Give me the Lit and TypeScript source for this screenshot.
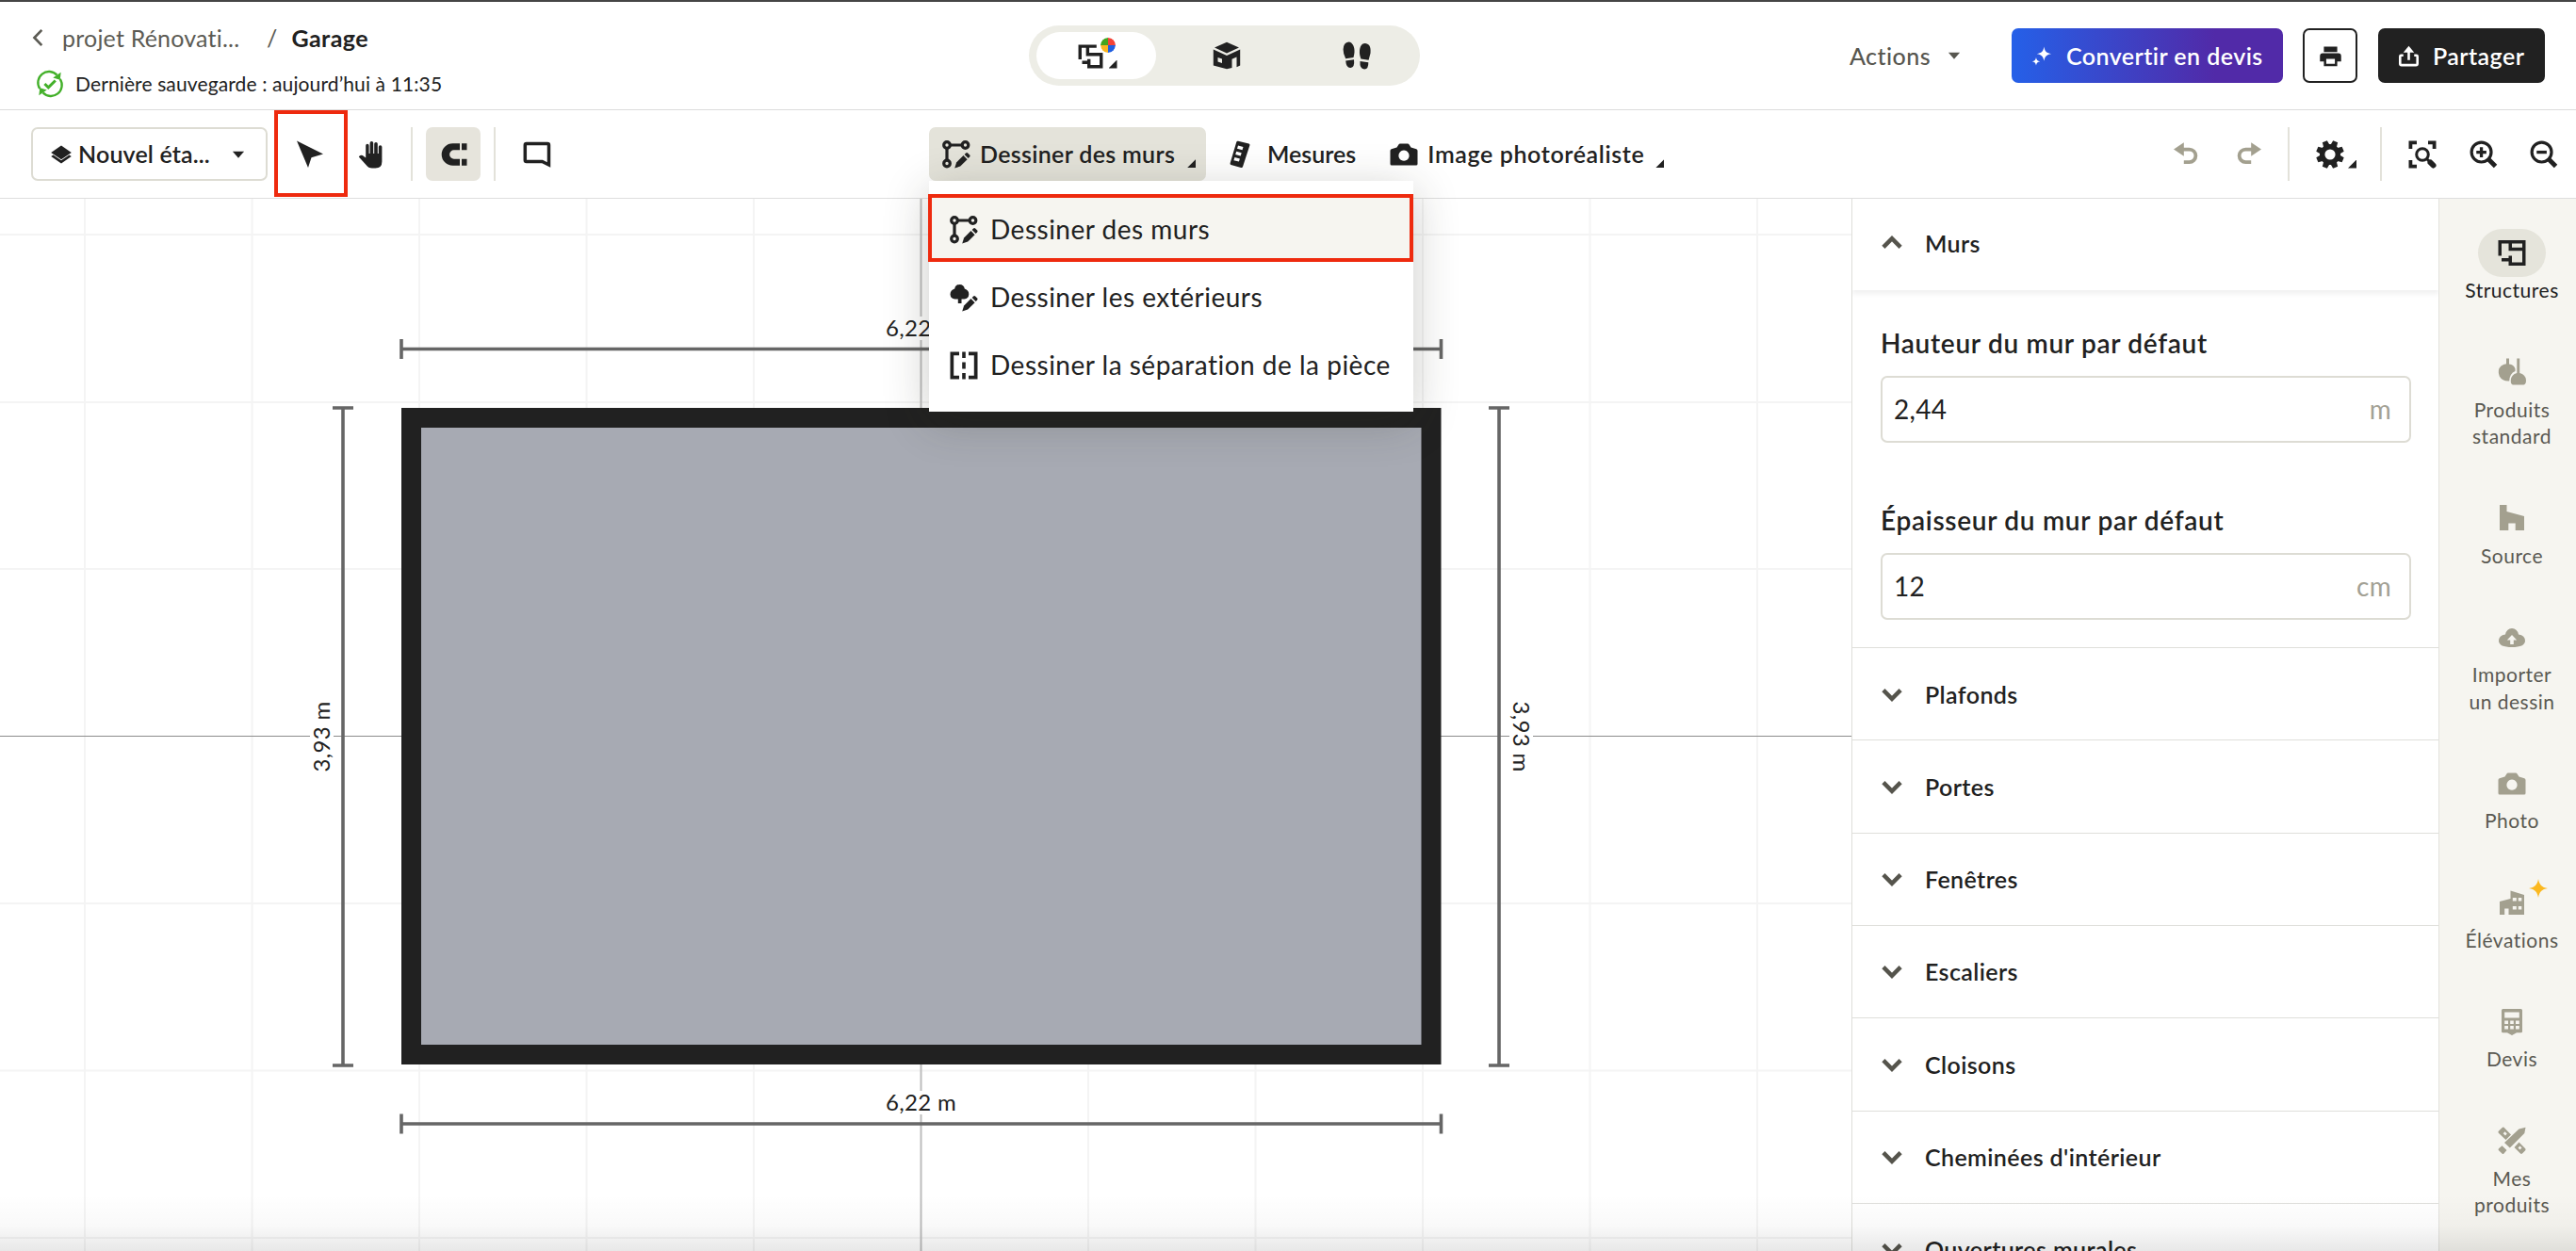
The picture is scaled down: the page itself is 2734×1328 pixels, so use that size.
import { LitElement, html, svg, css, nothing } from "lit";
import type { TemplateResult } from "lit";
import { classMap } from "lit/directives/class-map.js";

/* Icons are drawn on a 30 x 30 grid, one unit per pixel at their natural size. */
const drawWall = svg`
  <g fill="none" stroke="currentColor" stroke-width="3.2">
    <circle cx="5" cy="5" r="3.3"/><circle cx="24.5" cy="5" r="3.3"/><circle cx="5" cy="24.5" r="3.3"/>
    <path d="M8 5H21M5 8V21"/>
  </g>
  <path d="M13.2 29.5l1.9-6 7.4-7.4 4.1 4.1-7.4 7.4z"/><path d="M23.6 14.9l1.5-1.5q1-1 2 0l2 2q1 1 0 2l-1.5 1.500z"/>`;

const plan = svg`<path fill-rule="evenodd" d="M.5 1H29.500V28H11.500V23.500H4V20H11.500V17.500H15V24.500H26V12.300H11.500V4.500H4V17.500H.5zM15 4.500V8.800H26V4.500z"/>`;

const planColor = svg`<path fill="none" stroke="currentColor" stroke-width="3.800" d="M2.500 19V3.500H22M11.500 5V13H27.500V27.500H13V18.500M5 22.500H13"/>`;

const camera = svg`<path fill-rule="evenodd" d="M11 3.500H19Q20 3.500 20.600 4.400L22.500 7.500 28.300 9.300Q29.500 9.700 29.500 11V25Q29.500 26.500 28 26.500H2Q.5 26.500 .5 25V11Q.5 9.700 1.700 9.300L7.500 7.500 9.400 4.400Q10 3.500 11 3.500zM15 10.600a5.600 5.600 0 1 0 .01 0z"/>`;

const sparkle = svg`<path d="M17.500 2c1 6.500 3.500 9 10 10-6.500 1-9 3.500-10 10-1-6.500-3.500-9-10-10 6.500-1 9-3.500 10-10z"/><path d="M6.500 17c.7 3.700 1.800 4.800 5.500 5.500-3.700.7-4.800 1.800-5.500 5.500-.7-3.700-1.800-4.800-5.500-5.500 3.700-.7 4.800-1.800 5.500-5.500z"/>`;

const icons: Record<string, TemplateResult> = {
  back: svg`<path d="M19.500 4L8.800 15l10.700 11" fill="none" stroke="currentColor" stroke-width="3.600"/>`,
  saved: svg`<g fill="none" stroke="currentColor" stroke-width="2.500">
      <path d="M3.500 20.500A12.500 12.500 0 0 1 23 5"/><path d="M26.500 9.500A12.500 12.500 0 0 1 7 25"/>
      <path d="M9 15l4.200 4.200 8-8" stroke-width="3.200"/></g>
      <path d="M27.500 2l-1 8.500-8-2.500zM2.500 28l1-8.500 8 2.500z"/>`,
  layers: svg`<path d="M15 3L28.500 12.500 15 21.500 1.500 12.500z"/><path d="M1.500 17.500L4.500 15.500 15 22.800 25.500 15.500 28.500 17.500 15 27z"/>`,
  caret: svg`<path d="M2 8H28L15 23z"/>`,
  cursor: svg`<path d="M1 .5L29 14.500 16.500 18.200 13 29z"/>`,
  hand: svg`<path d="M8.200 5.500a1.700 1.700 0 0 1 3.400 0V14h1V2.700a1.800 1.800 0 0 1 3.600 0V14h1V3.700a1.800 1.800 0 0 1 3.600 0V14h1V7a1.800 1.800 0 0 1 3.600 0V22.500Q25.400 29.500 18.500 29.500H15Q11 29.500 8.500 26L.8 17.500Q2 15 4.800 16L8.200 18.500z"/>`,
  magnet: svg`<path d="M15.800 3.200H22V10.300H15.800a4.500 4.500 0 0 0 0 9.400H22V26.800H14.500a11.800 11.800 0 0 1 0-23.600zM24 3.200H29.500V10.300H24zM24 19.700H29.500V26.800H24z"/>`,
  comment: svg`<path d="M3.800 3.500H26Q27.500 3.500 27.500 5V26L20.500 22.500H3.800Q2.300 22.500 2.300 21V5Q2.300 3.500 3.800 3.500z" fill="none" stroke="currentColor" stroke-width="3.500"/>`,
  house3d: svg`<path d="M15 .8L28 6.500 15 12.500 2 6.500z"/><path fill-rule="evenodd" d="M.8 8.500L15 15 29.200 8.500V25.500L25.500 27.300V16.500L20.500 18.700V28L15 29.200.8 25.500zM5.500 17V21.500L10 23V18.500z"/>`,
  feet: svg`<path d="M6.500.5C10.500.8 13 6 12.500 11.500Q12.300 14 11.500 17L3.200 18.300Q.5 13 .6 8.500.8 1 6.500.5zM3.200 20.500L12 19.300Q13 27.500 8.500 28 3.800 28.400 3.200 20.500z"/><path d="M24 2C29.500 2.500 30 8 29.500 12.500L27.600 19.700 19.400 18.500C18.200 15 17.800 12.500 18 10 18.400 5 20.500 1.800 24 2zM18.500 21L27.300 22.200Q27.500 29.500 23 29.400 17.800 29.200 18.500 21z"/>`,
  plan,
  planColor,
  drawWall,
  ruler: svg`<path fill-rule="evenodd" d="M13 .8L24.500 3.500Q25.800 4 25.400 5.200L18 28Q17.500 29.200 16.200 28.900L5.500 26Q4.200 25.500 4.600 24.200L11.300 1.800Q11.800.5 13 .8zM13 5.500L12 8.800 17.500 10.200 18.500 7zM11.200 11.700L10.200 15 15.700 16.400 16.700 13.200zM9.400 17.900L8.400 21.200 13.900 22.600 14.900 19.400z"/>`,
  camera,
  undo: svg`<path d="M0 9.500L12 1.500V17.500z"/><path d="M10 9.500H18.500a7.500 7.500 0 0 1 0 15H12" fill="none" stroke="currentColor" stroke-width="4.200"/>`,
  redo: svg`<path d="M30 9.500L18 1.500V17.500z"/><path d="M20 9.500H11.500a7.500 7.500 0 0 0 0 15H18" fill="none" stroke="currentColor" stroke-width="4.200"/>`,
  gear: svg`<circle cx="15" cy="15" r="8.300" fill="none" stroke="currentColor" stroke-width="5.400"/>
      ${[0, 45, 90, 135, 180, 225, 270, 315].map((a) => svg`<path d="M11.500 6L12.300.2H17.700L18.500 6z" transform="rotate(${a + 22.5} 15 15)"/>`)}`,
  fit: svg`<path d="M.5.5H9V4.300H4.300V9H.5zM21 .5H29.500V9H25.700V4.300H21zM.5 21H4.300V25.700H9V29.500H.5z"/>
      <g fill="none" stroke="currentColor"><circle cx="15" cy="15" r="6.300" stroke-width="3"/><path d="M19.500 19.500L22 22" stroke-width="3"/><path d="M23.500 23.500L26.500 26.500" stroke-width="6" stroke-linecap="round"/></g>`,
  zoomIn: svg`<g fill="none" stroke="currentColor"><circle cx="13" cy="13" r="10.800" stroke-width="3.300"/><path d="M21 21L28.500 28.500" stroke-width="5"/><path d="M13 7.500V18.500M7.500 13H18.500" stroke-width="3.400"/></g>`,
  zoomOut: svg`<g fill="none" stroke="currentColor"><circle cx="13" cy="13" r="10.800" stroke-width="3.300"/><path d="M21 21L28.500 28.500" stroke-width="5"/><path d="M7.500 13H18.500" stroke-width="3.400"/></g>`,
  sparkle,
  printer: svg`<path fill-rule="evenodd" d="M6.500 3H23.500V10H6.500zM5 11.500H25Q28.500 11.500 28.500 15V22H23.500V28H6.500V22H1.500V15Q1.500 11.500 5 11.500zM9.500 18.500V25H20.500V18.500z"/>`,
  share: svg`<path d="M15 1L22.500 10H7.500z"/><path d="M15 9V20.500M7.500 14H4.500Q3 14 3 15.500V25.500Q3 27.500 5 27.500H25Q27 27.500 27 25.500V15.500Q27 14 25.500 14H22.500" fill="none" stroke="currentColor" stroke-width="3.400"/>`,
  tree: svg`<path d="M10.500 1Q15 1 15.800 5.500 20.500 7 20.300 11.500 20 16 15.500 16.500H12.500V21H8.800V16.500H5.500Q.8 16 .5 11.500.5 7 5.200 5.500 6 1 10.500 1z"/>
      <path d="M13.200 29.500l1.900-6 7.400-7.400 4.100 4.100-7.400 7.400z"/><path d="M23.600 14.900l1.500-1.500q1-1 2 0l2 2q1 1 0 2l-1.500 1.500z"/>`,
  split: svg`<path d="M.5.5H10V4.200H4.200V25.800H10V29.500H.5zM20 .5H29.500V29.500H20V25.800H25.800V4.200H20zM13.200.5H16.800V7H13.200zM13.200 11.500H16.800V18.500H13.200zM13.200 23H16.800V29.500H13.200z"/>`,
  up: svg`<path d="M4.500 20L15 9.500l10.500 10.500" fill="none" stroke="currentColor" stroke-width="5.200"/>`,
  down: svg`<path d="M4.500 10L15 20.500l10.500-10.500" fill="none" stroke="currentColor" stroke-width="5.200"/>`,
  lamps: svg`<path d="M9 .5H12V6.500Q17 7 18.500 11.500V14Q12.500 16.500 12.200 24.500 5 25 1.800 19.500-1 12.500 3.500 8.500 6 6.500 9 6.200z"/><path d="M20.300.5H23.200V16Q29.500 17.500 30 23.500 30 28 27.500 28.500H16Q13.600 28 13.800 23.500 14.300 17.500 20.300 16z"/>`,
  source: svg`<path d="M2 1H9.500V8L28 13V28H18.700V20.500H11.300V28H2z"/>`,
  cloud: svg`<path fill-rule="evenodd" d="M8 11.500Q9.500 5 15 5T22 11.500Q29 12.500 29 18.500 28.500 25 15 25T1 18.500Q1 12.500 8 11.500zM15 12L9.800 17.500H13.200V22H16.800V17.500H20.200z"/>`,
  facade: svg`<path fill-rule="evenodd" d="M2 14L13.500 11V2.500L28 7V28H11.500V21.500H7.200V28H2zM15.800 10V13.500H19.800V10zM21.800 10V13.500H25.300V10zM15.800 19V22.500H19.800V19zM21.800 19V22.500H25.300V19z"/>`,
  quote: svg`<path fill-rule="evenodd" d="M5.500 1H24.500Q26 1 26 2.500V25Q26 26.200 24.500 26.200H20L15 29 10 26.200H5.500Q4 26.200 4 25V2.500Q4 1 5.500 1zM7.200 4.500V10.500H22.800V4.500zM7.200 13.500V17H11V13.500zM13.200 13.500V17H16.800V13.500zM19 13.500V17H22.800V13.500zM7.200 19V22.500H11V19zM13.200 19V22.500H16.800V19zM19 19V22.500H22.800V19z"/>`,
  tools: svg`<path d="M29.500.8L28.300 7 12.800 22.500 7 17 22.500 2.500z"/><path d="M4.500 20.300L9.500 25 6.500 28.500Q5.500 29.500 4.500 28.500L1 25.300Q0 24.300 1 23.300z"/>
      <path fill-rule="evenodd" d="M6.500.8L14 8.500 8.500 14 .8 6.800Q0 5.800.8 4.800L4.500 1.200Q5.500.2 6.500.8zM7.500 5.300L5.700 7.200 8 9.400 9.800 7.500z"/>
      <path fill-rule="evenodd" d="M22.500 16.500L29.200 23.200Q30 24.200 29.200 25.200L26 28.500Q25 29.400 24 28.500L17.500 22zM23.500 20.500L21.500 22.500 23.500 24.500 25.500 22.500z"/>`,
};

class UiIcon extends LitElement {
  static properties = { name: {}, size: { type: Number } };
  declare name: string;
  declare size: number;
  static styles = css`
    :host { display: inline-flex; flex: none; }
    .glyph { display: block; overflow: visible; fill: currentColor; }
  `;
  render() {
    const size = this.size || 30;
    return html`<svg class="glyph" width=${size} height=${size} viewBox="0 0 30 30">${icons[this.name] ?? nothing}</svg>`;
  }
}
customElements.define("ui-icon", UiIcon);

const base = css`
  :host, * { box-sizing: border-box; }
  .corner { width: 9px; height: 9px; background: #212121; clip-path: polygon(100% 0, 100% 100%, 0 100%); flex: none; }
`;

class AppHeader extends LitElement {
  static styles = [base, css`
    :host { display: grid; grid-template-columns: 1092px 415px 1fr; flex: none; height: 117px; border-top: 2px solid #454545; border-bottom: 1px solid #dcdcdc; background: #fff; }
    .project { display: flex; flex-direction: column; padding: 22px 0 0 30px; }
    .crumbs { display: flex; align-items: center; height: 32px; color: #5c5b54; letter-spacing: .2px; }
    .crumbs .name { margin-left: 14px; width: 217px; white-space: pre; }
    .crumbs .page { margin-left: 15px; font-weight: 700; color: #212121; letter-spacing: .4px; }
    .status { display: flex; align-items: center; gap: 13px; height: 26px; margin: 20px 0 0 9px; font-size: 21px; letter-spacing: .12px; }
    .green { color: #43b02a; }
    .modes { display: flex; align-items: center; margin-top: 25px; height: 64px; padding: 0 8px; gap: 12px; border-radius: 32px; background: #edede6; }
    .mode { display: flex; align-items: center; justify-content: center; flex: none; width: 126px; height: 50px; border-radius: 25px; }
    .mode.on { width: 127px; background: #fff; }
    .view { position: relative; display: flex; width: 42px; height: 30px; align-items: flex-end; gap: 6px; margin: 0 0 3px 2px; }
    .pie { position: absolute; right: 2px; top: -3px; width: 16px; height: 16px; border-radius: 50%; outline: 2px solid #fff; background: conic-gradient(#f44336 0 25%, #1f5fe0 0 50%, #f9b521 0 75%, #43a51f 0); }
    .actions { display: flex; align-items: center; justify-content: flex-end; padding: 0 33px 0 0; height: 114px; letter-spacing: .45px; font-weight: 600; }
    .menu { display: flex; align-items: center; gap: 18px; color: #57564f; margin-right: 54px; font-weight: 500; }
    .btn { display: flex; align-items: center; height: 58px; border-radius: 7px; color: #fff; padding: 0 0 0 21px; flex: none; white-space: nowrap; }
    .quote { width: 288px; gap: 14px; background: linear-gradient(90deg, #2560e8, #512aa8 75%); }
    .print { width: 58px; margin: 0 22px 0 21px; justify-content: center; padding: 0; border: 2px solid #212121; color: #212121; background: #fff; }
    .share { width: 177px; gap: 14px; background: #212121; }
  `];
  render() {
    return html`
      <div class="project">
        <div class="crumbs"><ui-icon name="back" size="22"></ui-icon><span class="name">projet Rénovati...</span><span>/</span><span class="page">Garage</span></div>
        <div class="status"><ui-icon class="green" name="saved" size="28"></ui-icon><span>Dernière sauvegarde : aujourd’hui à 11:35</span></div>
      </div>
      <div class="modes">
        <div class="mode on"><div class="view"><ui-icon name="planColor" size="27"></ui-icon><span class="corner"></span><span class="pie"></span></div></div>
        <div class="mode"><ui-icon name="house3d"></ui-icon></div>
        <div class="mode"><ui-icon name="feet"></ui-icon></div>
      </div>
      <div class="actions">
        <div class="menu">Actions<ui-icon name="caret" size="14"></ui-icon></div>
        <div class="btn quote"><ui-icon name="sparkle" size="23"></ui-icon>Convertir en devis</div>
        <div class="btn print"><ui-icon name="printer" size="25"></ui-icon></div>
        <div class="btn share"><ui-icon name="share" size="23"></ui-icon>Partager</div>
      </div>`;
  }
}
customElements.define("app-header", AppHeader);

class AppToolbar extends LitElement {
  static styles = [base, css`
    :host { display: grid; grid-template-columns: 986px 1fr auto; flex: none; height: 94px; border-bottom: 1px solid #dedede; background: #fff; font-weight: 600; }
    .group { display: flex; align-items: center; height: 93px; }
    .left { padding-left: 33px; }
    .level { display: flex; align-items: center; width: 251px; height: 57px; padding-left: 18px; border: 2px solid #dddcd3; border-radius: 7px; letter-spacing: .15px; }
    .level .label { margin: 0 23px 0 6px; padding-bottom: 2px; white-space: pre; }
    .picked { display: flex; align-items: center; justify-content: center; width: 78px; height: 92px; margin: -2px 11px 0 7px; padding: 2px 2px 0 0; border: 4px solid #ee2a0e; }
    .rule { width: 2px; height: 57px; background: #e3e2da; flex: none; }
    .magnet { display: flex; align-items: center; justify-content: center; width: 58px; height: 57px; border-radius: 7px; background: #e6e4dc; }
    .tool { display: flex; align-items: center; height: 57px; border-radius: 7px; letter-spacing: .32px; white-space: nowrap; }
    .tool.on { width: 294px; padding-left: 14px; background: #e4e3da; }
    .tool .label { margin-left: 10px; padding-bottom: 2px; }
    .low { align-self: flex-end; margin-bottom: 14px; }
    .right { padding-right: 20px; }
    .faded { color: #a3a08f; }
  `];
  render() {
    return html`
      <div class="group left">
        <div class="level"><ui-icon name="layers" size="24"></ui-icon><span class="label">Nouvel éta...</span><ui-icon name="caret" size="14"></ui-icon></div>
        <div class="picked"><ui-icon name="cursor"></ui-icon></div>
        <ui-icon name="hand"></ui-icon>
        <span class="rule" style="margin:0 14px 0 26px"></span>
        <div class="magnet"><ui-icon name="magnet"></ui-icon></div>
        <span class="rule" style="margin:0 29px 0 14px"></span>
        <ui-icon name="comment"></ui-icon>
      </div>
      <div class="group">
        <div class="tool on"><ui-icon name="drawWall"></ui-icon><span class="label">Dessiner des murs</span><span class="corner low" style="margin-left:13px"></span></div>
        <div class="tool" style="margin-left:21px;letter-spacing:0"><ui-icon name="ruler"></ui-icon><span class="label" style="margin-left:14px">Mesures</span></div>
        <div class="tool" style="margin-left:36px;letter-spacing:.62px"><ui-icon name="camera"></ui-icon><span class="label">Image photoréaliste</span><span class="corner low" style="margin-left:12px"></span></div>
      </div>
      <div class="group right">
        <ui-icon class="faded" name="undo" size="27"></ui-icon>
        <ui-icon class="faded" name="redo" size="27" style="margin-left:39px"></ui-icon>
        <span class="rule" style="margin:0 28px"></span>
        <ui-icon name="gear"></ui-icon><span class="corner" style="margin:21px 25px 0 4px"></span>
        <span class="rule" style="margin-right:28px"></span>
        <ui-icon name="fit"></ui-icon>
        <ui-icon name="zoomIn" size="29" style="margin:0 35px"></ui-icon>
        <ui-icon name="zoomOut" size="29"></ui-icon>
      </div>`;
  }
}
customElements.define("app-toolbar", AppToolbar);

class PlanCanvas extends LitElement {
  static styles = css`
    :host { display: block; flex: none; width: 1965px; height: 1117px; background: #fff; overflow: hidden; }
    .plan { display: block; }
    .dim { font-size: 24px; letter-spacing: .35px; fill: #212121; }
  `;
  render() {
    const cols = [90, 267.5, 445, 622.5, 800, 1155, 1332.5, 1510, 1687.5, 1865];
    const rows = [249, 427, 604, 959, 1136.5, 1314];
    return html`<svg class="plan" width="1965" height="1117" viewBox="0 211 1965 1117">
      <g stroke="#f4f4f4" stroke-width="2">
        ${cols.map((x) => svg`<path d="M${x} 211V1328"/>`)}
        ${rows.map((y) => svg`<path d="M0 ${y}H1965"/>`)}
      </g>
      <path d="M0 781.500H1965" stroke="#8c8c8c"/>
      <path d="M977.500 211V1328" stroke="#bdbdbd" stroke-width="2"/>
      <rect x="436.500" y="443.500" width="1082.500" height="676" fill="#a7aab3" stroke="#212121" stroke-width="21"/>
      <g fill="none" stroke="#666" stroke-width="3.600">
        <path d="M426 370.500H1529.500M426 360V381M1529.500 360V381"/>
        <path d="M426 1193H1529.500M426 1182.500V1203.500M1529.500 1182.500V1203.500"/>
        <path d="M364 433V1131M353 433H375M353 1131H375"/>
        <path d="M1591 433V1131M1580 433H1602M1580 1131H1602"/>
      </g>
      <g fill="#fff">
        <rect x="936" y="336" width="84" height="25"/><rect x="936" y="1158" width="84" height="25"/>
        <rect x="329" y="740" width="25" height="83"/><rect x="1602" y="740" width="25" height="83"/>
      </g>
      <g class="dim" text-anchor="middle">
        <text x="977.500" y="357">6,22 m</text>
        <text x="977.500" y="1179">6,22 m</text>
        <text transform="translate(350 782) rotate(-90)">3,93 m</text>
        <text transform="translate(1606 782) rotate(90)">3,93 m</text>
      </g>
    </svg>`;
  }
}
customElements.define("plan-canvas", PlanCanvas);

class SettingsPanel extends LitElement {
  static styles = [base, css`
    :host { display: block; flex: none; width: 624px; height: 1117px; overflow: hidden; border-left: 1px solid #dededa; border-right: 1px solid #e2e2de; background: #fff; }
    .head { display: flex; align-items: center; gap: 22px; padding-left: 29px; font-weight: 600; letter-spacing: .4px; }
    .chev { color: #55544c; }
    .open { height: 97px; box-shadow: 0 4px 5px rgba(0,0,0,.06); }
    .open .head { height: 94px; }
    .body { height: 379px; padding: 39px 29px 0 30px; }
    .label { height: 34px; line-height: 34px; font-size: 28px; font-weight: 600; letter-spacing: .7px; }
    .field { display: flex; align-items: center; justify-content: space-between; height: 71px; margin: 18px 0 65px; padding: 1px 19px 0 12px; border: 2px solid #dddcd4; border-radius: 7px; font-size: 28px; letter-spacing: .3px; }
    .unit { color: #a3a195; }
    .row { height: 98.330px; border-top: 1px solid #dfdfdb; }
    .row .head { height: 97px; }
  `];
  private sections = ["Plafonds", "Portes", "Fenêtres", "Escaliers", "Cloisons", "Cheminées d'intérieur", "Ouvertures murales"];
  render() {
    return html`
      <div class="open"><div class="head"><ui-icon class="chev" name="up" size="26"></ui-icon>Murs</div></div>
      <div class="body">
        <div class="label">Hauteur du mur par défaut</div>
        <div class="field"><span>2,44</span><span class="unit">m</span></div>
        <div class="label">Épaisseur du mur par défaut</div>
        <div class="field"><span>12</span><span class="unit">cm</span></div>
      </div>
      ${this.sections.map((s) => html`<div class="row"><div class="head"><ui-icon class="chev" name="down" size="26"></ui-icon>${s}</div></div>`)}`;
  }
}
customElements.define("settings-panel", SettingsPanel);

class SideRail extends LitElement {
  static styles = [base, css`
    :host { display: flex; flex: none; flex-direction: column; align-items: center; gap: 47px; width: 145px; height: 1117px; padding: 32px 0 0 9px; background: #f6f5f0; overflow: hidden; color: #5a5952; }
    .item { display: flex; flex-direction: column; align-items: center; flex: none; font-size: 21px; line-height: 28.500px; letter-spacing: .5px; text-align: center; }
    .text { white-space: pre-line; }
    .badge { position: relative; display: flex; align-items: center; justify-content: center; width: 72px; height: 51px; border-radius: 26px; color: #a3a08f; }
    .item.on { color: #212121; }
    .on .badge { background: #e5e4db; color: #212121; }
    .star { position: absolute; right: -2px; top: 0; color: #fbb81f; }
    .four { display: block; fill: currentColor; }
  `];
  private items = [
    { icon: "plan", label: "Structures", on: true },
    { icon: "lamps", label: "Produits\nstandard" },
    { icon: "source", label: "Source" },
    { icon: "cloud", label: "Importer\nun dessin" },
    { icon: "camera", label: "Photo" },
    { icon: "facade", label: "Élévations", star: true },
    { icon: "quote", label: "Devis" },
    { icon: "tools", label: "Mes\nproduits" },
  ];
  render() {
    return this.items.map((i) => html`<div class=${classMap({ item: true, on: !!i.on })}>
      <div class="badge"><ui-icon name=${i.icon}></ui-icon>
        ${i.star ? html`<span class="star"><svg class="four" width="20" height="20" viewBox="0 0 20 20"><path d="M10 0c1 6.200 3.800 9 10 10-6.200 1-9 3.800-10 10-1-6.200-3.800-9-10-10 6.200-1 9-3.800 10-10z"/></svg></span>` : nothing}
      </div><span class="text">${i.label}</span></div>`);
  }
}
customElements.define("side-rail", SideRail);

class DrawMenu extends LitElement {
  static styles = [base, css`
    :host { display: block; width: 514px; height: 245px; padding-top: 14px; background: #fff; box-shadow: 0 10px 45px rgba(40,40,30,.24); font-size: 28px; letter-spacing: .5px; }
    .row { display: flex; align-items: center; gap: 13px; height: 72px; padding: 3px 0 0 22px; white-space: nowrap; }
    .row.on { margin-left: -1px; padding-left: 23px; background: #f6f5f0; outline: 4px solid #ee2a0e; outline-offset: -4px; }
  `];
  private rows = [["drawWall", "Dessiner des murs"], ["tree", "Dessiner les extérieurs"], ["split", "Dessiner la séparation de la pièce"]];
  render() {
    return this.rows.map(([icon, label], n) => html`<div class=${classMap({ row: true, on: n === 0 })}><ui-icon name=${icon}></ui-icon>${label}</div>`);
  }
}
customElements.define("draw-menu", DrawMenu);

class AppRoot extends LitElement {
  static styles = css`
    :host { display: flex; flex-direction: column; position: relative; width: 2734px; height: 1328px; overflow: hidden; background: #fff; color: #212121; font: 400 25px/1.2 Lato, "Liberation Sans", sans-serif; }
    .main { display: flex; flex: none; height: 1117px; }
    .popup { position: absolute; left: 986px; top: 192px; }
    .fade { position: absolute; left: 0; right: 0; bottom: 0; height: 60px; pointer-events: none; background: linear-gradient(rgba(0,0,0,0), rgba(0,0,0,.025) 55%, rgba(0,0,0,.09)); }
  `;
  render() {
    return html`
      <app-header></app-header>
      <app-toolbar></app-toolbar>
      <div class="main"><plan-canvas></plan-canvas><settings-panel></settings-panel><side-rail></side-rail></div>
      <draw-menu class="popup"></draw-menu>
      <div class="fade"></div>`;
  }
}
customElements.define("app-root", AppRoot);
